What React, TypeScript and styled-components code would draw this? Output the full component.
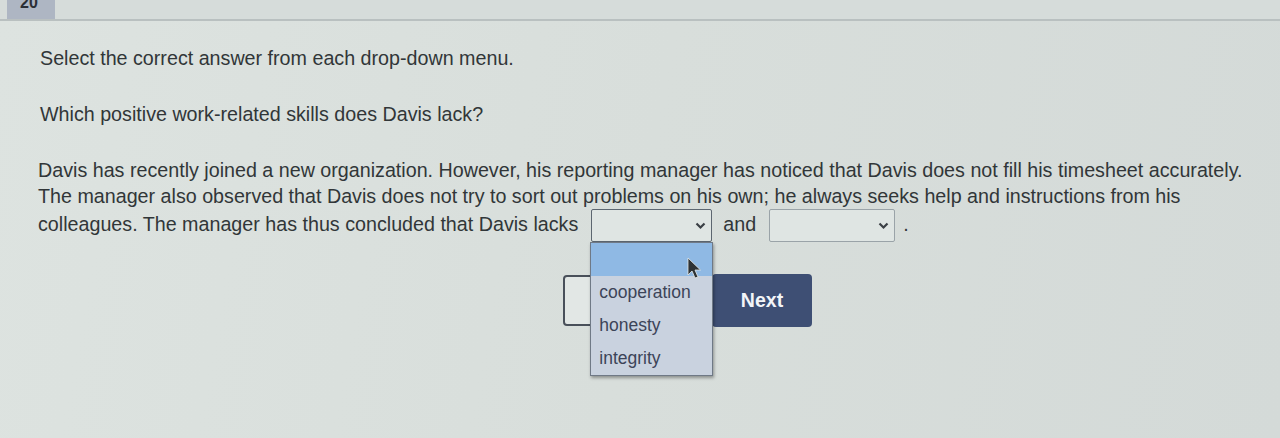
import React from "react";
import styled, { createGlobalStyle } from "styled-components";

const Global = createGlobalStyle`
  html, body { margin: 0; padding: 0; }
  body {
    background: #d9dfdc;
    font-family: "Liberation Sans", Arial, sans-serif;
    color: #313638;
    width: 1280px;
    height: 438px;
    overflow: hidden;
  }
`;

const Page = styled.div`
  width: 1280px;
  height: 438px;
  background: linear-gradient(100deg, #dde3e0 0%, #d8dedb 50%, #d4dad8 100%);
  position: relative;
`;

const TopBar = styled.div`
  height: 19px;
  border-bottom: 2px solid #b9c0c0;
  display: flex;
  padding-left: 7px;
  background: #d6dcda;
`;

const Tab = styled.div`
  width: 48px;
  height: 19px;
  background: #aeb6c3;
  color: #2c2f36;
  font-size: 16px;
  font-weight: bold;
  line-height: 6px;
  overflow: hidden;
  padding-left: 13px;
  box-sizing: border-box;
`;

const Content = styled.div`
  padding: 25px 0 0 40px;
  font-size: 19.7px;
`;

const Instruction = styled.p`
  margin: 0;
  line-height: 24px;
`;

const Question = styled.p`
  margin: 32px 0 0;
  line-height: 24px;
`;

const Passage = styled.p`
  margin: 31px 0 0 -2px;
  line-height: 26px;
  white-space: nowrap;
`;

const SelectWrap = styled.span<{ $after: number }>`
  position: relative;
  display: inline-block;
  vertical-align: middle;
  margin: 0 ${(p) => p.$after}px 0 13px;
`;

const SelectBox = styled.span<{ $w: number; $open?: boolean }>`
  display: inline-flex;
  align-items: center;
  justify-content: flex-end;
  box-sizing: border-box;
  width: ${(p) => p.$w}px;
  height: 33px;
  border: 1px solid ${(p) => (p.$open ? "#5c6670" : "#9aa3a8")};
  border-radius: 2px;
  background: #dfe5e3;
  padding-right: 5px;
  vertical-align: middle;
`;

const Dropdown = styled.div`
  position: absolute;
  left: -1px;
  top: 33px;
  width: 121px;
  background: #c9d2df;
  border: 1px solid #6f7986;
  box-shadow: 1px 2px 3px rgba(0, 0, 0, 0.35);
  z-index: 5;
`;

const Option = styled.div<{ $hl?: boolean }>`
  height: 33px;
  line-height: 33px;
  padding-left: 8px;
  font-size: 17.5px;
  color: #3c4458;
  background: ${(p) => (p.$hl ? "#8fb9e4" : "transparent")};
`;

const Buttons = styled.div`
  display: flex;
  gap: 9px;
  margin: 32px 0 0 523px;
  align-items: center;
`;

const ResetButton = styled.button`
  width: 140px;
  height: 51px;
  border: 2px solid #49505a;
  border-radius: 4px;
  background: #e2e7e5;
`;

const NextButton = styled.button`
  width: 100px;
  height: 53px;
  border: none;
  border-radius: 4px;
  background: #3e4f74;
  color: #f3f5f8;
  font-family: "Liberation Sans", Arial, sans-serif;
  font-weight: bold;
  font-size: 19.5px;
`;

const Cursor = styled.svg`
  position: absolute;
  left: 687px;
  top: 257px;
  z-index: 10;
`;

const Chevron = () => (
  <svg width="11" height="8" viewBox="0 0 11 8">
    <path d="M1.5 1.5 L5.5 5.5 L9.5 1.5" stroke="#3a3f45" strokeWidth="2.2" fill="none" />
  </svg>
);

export default function App() {
  return (
    <Page>
      <Global />
      <TopBar>
        <Tab>20</Tab>
      </TopBar>
      <Content>
        <Instruction>Select the correct answer from each drop-down menu.</Instruction>
        <Question>Which positive work-related skills does Davis lack?</Question>
        <Passage>
          Davis has recently joined a new organization. However, his reporting manager has noticed that Davis does not fill his timesheet accurately.
          <br />
          The manager also observed that Davis does not try to sort out problems on his own; he always seeks help and instructions from his
          <br />
          colleagues. The manager has thus concluded that Davis lacks
          <SelectWrap $after={11}>
            <SelectBox $w={121} $open>
              <Chevron />
            </SelectBox>
            <Dropdown>
              <Option $hl />
              <Option>cooperation</Option>
              <Option>honesty</Option>
              <Option>integrity</Option>
            </Dropdown>
          </SelectWrap>
          and
          <SelectWrap $after={8}>
            <SelectBox $w={126}>
              <Chevron />
            </SelectBox>
          </SelectWrap>
          .
        </Passage>
        <Buttons>
          <ResetButton />
          <NextButton>Next</NextButton>
        </Buttons>
      </Content>
      <Cursor width="16" height="24" viewBox="0 0 16 24">
        <path d="M1 1 L1 18 L5 14 L8 21 L11 20 L8 13 L13.5 13 Z" fill="#2e3336" stroke="#e6eae8" strokeWidth="0.8" />
      </Cursor>
    </Page>
  );
}
